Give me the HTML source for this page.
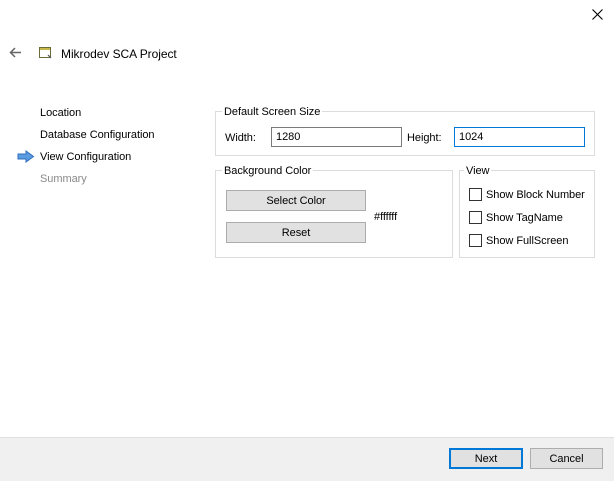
<!DOCTYPE html>
<html><head><style>
body{margin:0;width:614px;height:480px;background:#fff;font-family:"Liberation Sans",sans-serif;font-size:11px;letter-spacing:-0.05px;color:#000;position:relative;overflow:hidden}
.a{position:absolute}
.grp{position:absolute;border:1px solid #dcdcdc}
.gt{position:absolute;top:-8px;left:6px;background:#fff;padding:0 2px;line-height:14px}
.inp{position:absolute;border:1px solid #7a7a7a;height:18px;line-height:19px;padding-left:4px;box-sizing:content-box}
.btn{position:absolute;background:#e1e1e1;border:1px solid #adadad;text-align:center;box-sizing:border-box}
.cb{position:absolute;width:11px;height:11px;border:1px solid #333;background:#fff}
</style></head><body>
<svg class="a" style="left:592px;top:9px" width="11" height="11"><path d="M0.5 0.5L10.5 10.5M10.5 0.5L0.5 10.5" stroke="#000" stroke-width="1.1"/></svg>
<svg class="a" style="left:9px;top:47px" width="13" height="11"><path d="M12 5.5H1.5M6 1L1.5 5.5L6 10" stroke="#666" stroke-width="1.5" fill="none"/></svg>
<svg class="a" style="left:39px;top:47px" width="14" height="13"><rect x="0.5" y="0.5" width="11" height="10" fill="#fff" stroke="#6b6b3a"/><rect x="1" y="1" width="10" height="2" fill="#c9b94a"/><path d="M9 8l3 3" stroke="#555" stroke-width="1.2"/></svg>
<div class="a" style="left:61px;top:47px;font-size:12px">Mikrodev SCA Project</div>
<div class="a" style="left:40px;top:107px">Location</div>
<div class="a" style="left:40px;top:129px">Database Configuration</div>
<svg class="a" style="left:17px;top:150px" width="18" height="13"><path d="M1 4H9V1L16.5 6.5L9 12V9H1Z" fill="#5b9be0" stroke="#2f6fbf"/></svg>
<div class="a" style="left:40px;top:151px">View Configuration</div>
<div class="a" style="left:40px;top:173px;color:#8a8a8a">Summary</div>

<div class="grp" style="left:215px;top:111px;width:378px;height:43px"><span class="gt" style="top:-7px">Default Screen Size</span></div>
<div class="a" style="left:225px;top:132px">Width:</div>
<div class="inp" style="left:271px;top:127px;width:125px">1280</div>
<div class="a" style="left:407px;top:132px">Height:</div>
<div class="inp" style="left:454px;top:127px;width:125px;border-color:#0078d7">1024</div>

<div class="grp" style="left:215px;top:170px;width:236px;height:86px"><span class="gt" style="top:-7px">Background Color</span></div>
<div class="btn" style="left:226px;top:190px;width:140px;height:21px;line-height:20px">Select Color</div>
<div class="btn" style="left:226px;top:222px;width:140px;height:21px;line-height:20px">Reset</div>
<div class="a" style="left:374px;top:211px">#ffffff</div>

<div class="grp" style="left:459px;top:170px;width:134px;height:86px"><span class="gt" style="left:4px;top:-7px">View</span></div>
<div class="cb" style="left:469px;top:188px"></div><div class="a" style="left:486px;top:189px">Show Block Number</div>
<div class="cb" style="left:469px;top:211px"></div><div class="a" style="left:486px;top:212px">Show TagName</div>
<div class="cb" style="left:469px;top:234px"></div><div class="a" style="left:486px;top:235px">Show FullScreen</div>

<div class="a" style="left:0;top:437px;width:614px;height:43px;background:#f0f0f0;border-top:1px solid #dfdfdf"></div>
<div class="btn" style="left:449px;top:448px;width:74px;height:21px;line-height:18px;border:2px solid #0078d7">Next</div>
<div class="btn" style="left:530px;top:448px;width:73px;height:21px;line-height:20px">Cancel</div>
</body></html>
